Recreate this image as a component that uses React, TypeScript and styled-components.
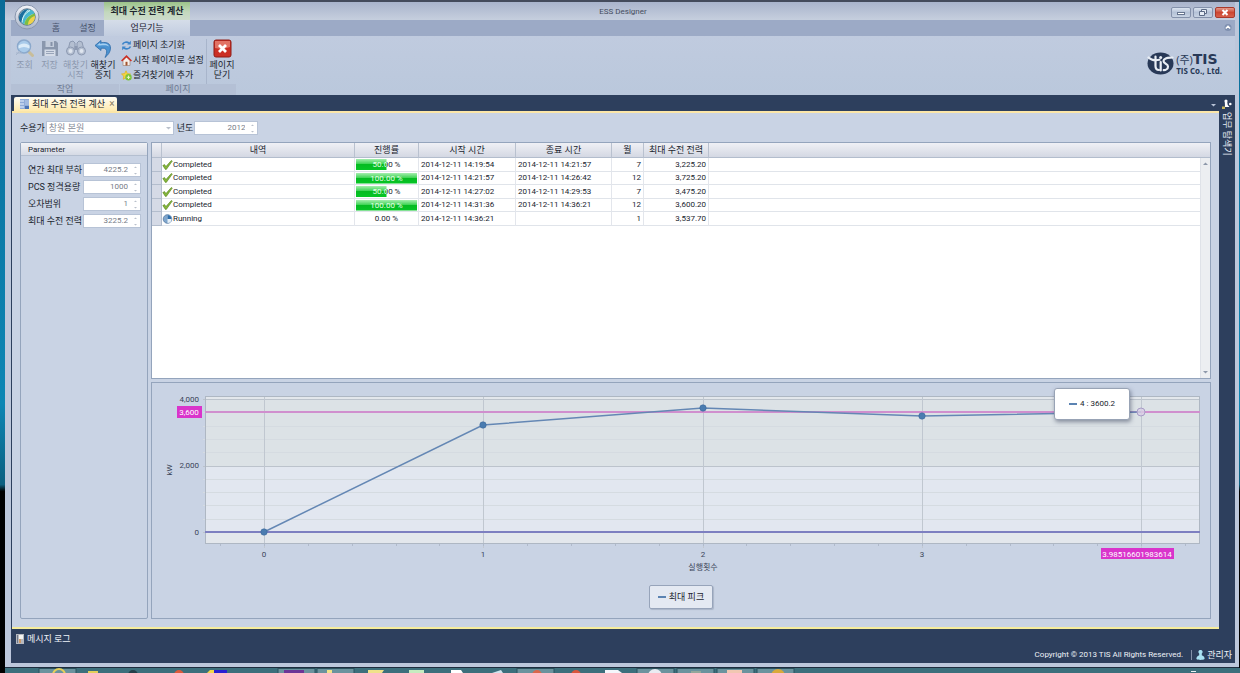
import React, { useLayoutEffect, useRef, useState } from "react";
import styled, { createGlobalStyle, css } from "styled-components";

const GlobalStyle = createGlobalStyle`
  * { box-sizing: border-box; }
  body {
    margin: 0;
    font-family: Roboto, "Noto Sans CJK KR", sans-serif;
    font-size: 9px;
    line-height: 12px;
    color: #20242e;
  }
  button, input, select { font: inherit; color: inherit; margin: 0; }
  button { border: 0; padding: 0; background: none; cursor: pointer; }
`;

const NAVY = "#2d3f5d";
const LINE = "#94a4bc";

const Desktop = styled.div`
  min-height: 100vh;
  display: flex;
  flex-direction: column;
  background: linear-gradient(#0a6c98 0, #0c86b4 60%, #0b5f80 72%, #000 73%);
`;

const AppWindow = styled.div`
  position: relative;
  flex: 1;
  display: flex;
  flex-direction: column;
  margin: 0 1px 0 5px;
  padding: 0 4px 4px 6px;
  background: #bcc7db;
  border-top: 2px solid #444b5c;
  border-bottom: 1px solid #1e2c3e;
`;

/* ---------- title bar ---------- */

const TitleBar = styled.header`
  display: grid;
  grid-template-columns: 1fr auto 1fr;
  height: 18px;
  margin-left: -6px;
  padding-left: 6px;
  background: linear-gradient(#a9b4cc, #c6cfde);
`;

const ContextCaption = styled.div`
  width: 86px;
  margin-left: 93px;
  text-align: center;
  font-weight: 700;
  line-height: 18px;
  white-space: nowrap;
  background: linear-gradient(#9cc389, #c3d8bd 50%, #cfdccf);
`;

const AppTitle = styled.h1`
  margin: 0;
  font-size: 8px;
  font-weight: 400;
  line-height: 20px;
  color: #454d60;
`;

const WindowButtons = styled.div`
  display: flex;
  justify-content: flex-end;
  gap: 2px;
  padding-top: 5px;
`;

const WindowButton = styled.button<{ $danger?: boolean }>`
  display: flex;
  align-items: center;
  justify-content: center;
  width: 20px;
  height: 11px;
  border: 1px solid ${(p) => (p.$danger ? "#a8392c" : "#8491ab")};
  border-radius: 2px;
  background: ${(p) =>
    p.$danger
      ? "linear-gradient(#e39a8c, #cc4631 50%, #d8604a)"
      : "linear-gradient(#dbe3ef, #b5c2d7 50%, #c8d3e3)"};
`;

const Orb = styled.button`
  position: absolute;
  left: 9px;
  top: 2px;
  width: 26px;
  height: 26px;
`;

/* ---------- ribbon ---------- */

const TabStrip = styled.nav`
  display: flex;
  height: 16px;
  padding-left: 30px;
  background: #9caac6;
`;

const RibbonTab = styled.button<{ $active?: boolean; $wide?: boolean }>`
  width: ${(p) => (p.$active ? 86 : p.$wide ? 33 : 30)}px;
  color: ${(p) => (p.$active ? "#1a2030" : "#46526c")};
  ${(p) =>
    p.$active &&
    css`
      background: linear-gradient(#d5dde9, #c2cde0);
    `}
`;

const CollapseButton = styled.button`
  margin-left: auto;
  padding-right: 3px;
`;

const Ribbon = styled.section`
  display: flex;
  height: 59px;
  background: linear-gradient(#c0cbdf, #bac8dc);
`;

const Group = styled.div<{ $width: number }>`
  display: flex;
  flex-direction: column;
  width: ${(p) => p.$width}px;
  margin-right: 1px;
`;

const GroupBody = styled.div`
  flex: 1;
  display: flex;
  padding: 3px 0 0 1px;
`;

const GroupLabel = styled.div`
  height: 11px;
  line-height: 11px;
  text-align: center;
  color: #6d7a92;
  background: #b4c0d5;
`;

const BigButton = styled.button<{ $width: number }>`
  display: flex;
  flex-direction: column;
  align-items: center;
  width: ${(p) => p.$width}px;
  line-height: 10px;
  white-space: pre-line;
  &:disabled { color: #8c98ae; }
  svg { margin: 0 0 2px; flex: none; }
`;

const SmallList = styled.div`
  display: flex;
  flex-direction: column;
  width: 86px;
  margin-right: 2px;
  border-right: 1px solid #a8b5cb;
`;

const SmallButton = styled.button`
  display: flex;
  align-items: center;
  gap: 1px;
  height: 15px;
  padding-bottom: 3px;
  white-space: nowrap;
`;

const Brand = styled.div`
  display: flex;
  align-items: center;
  gap: 2px;
  margin: 0 13px 4px auto;
  color: #283957;
`;

const BrandName = styled.div`
  font-family: "Open Sans", "Noto Sans CJK KR", sans-serif;
  font-size: 8px;
  font-weight: 700;
  line-height: 9px;
`;

const BrandTop = styled.div`
  display: flex;
  align-items: center;
  height: 13px;
  font-size: 11px;
  line-height: 13px;
  font-weight: 400;
  strong { font-family: "DejaVu Sans", sans-serif; font-size: 14px; font-weight: 700; }
`;

/* ---------- work area ---------- */

const Dock = styled.div`
  flex: 1;
  display: flex;
  background: ${NAVY};
`;

const DockMain = styled.div`
  flex: 1;
  display: flex;
  flex-direction: column;
  min-width: 0;
  padding: 2px 0 0 1px;
`;

const DocTabs = styled.div`
  display: flex;
  align-items: flex-end;
  justify-content: space-between;
  height: 14px;
  padding-left: 2px;
`;

const DocTab = styled.div`
  display: flex;
  align-items: center;
  gap: 3px;
  height: 14px;
  padding: 0 1px 0 6px;
  border-radius: 2px 2px 0 0;
  background: linear-gradient(#fffdf4, #ffeaad);
  white-space: nowrap;
`;

const TabClose = styled.button`
  width: 8px;
  font-size: 10px;
  line-height: 12px;
  color: #8c8164;
`;

const OverflowButton = styled.button`
  align-self: center;
  width: 12px;
  height: 12px;
`;

const Page = styled.main`
  flex: 1;
  display: flex;
  flex-direction: column;
  padding: 8px 8px 8px 8px;
  background: #c9d3e4;
  border-top: 2px solid #fbe6a8;
  border-bottom: 2px solid #f6ec9c;
`;

const FilterRow = styled.div`
  display: flex;
  align-items: center;
  height: 14px;
  margin-bottom: 7px;
  gap: 2px;
`;

const Field = styled.label`
  display: flex;
  align-items: center;
  gap: 1px;
  margin-right: 1px;
  white-space: nowrap;
`;

const SelectWrap = styled.span`
  position: relative;
  display: block;
  width: 128px;
  svg { position: absolute; right: 3px; top: 6px; }
`;

const Select = styled.select`
  display: block;
  width: 100%;
  height: 14px;
  padding: 0 2px;
  appearance: none;
  color: #858b97;
  background: #fff;
  border: 1px solid #b7c3d6;
  border-radius: 0;
`;

const SpinBox = styled.span<{ $width: number }>`
  display: flex;
  align-items: center;
  flex: none;
  width: ${(p) => p.$width}px;
  height: 14px;
  padding-right: 2px;
  background: #fff;
  border: 1px solid #b7c3d6;
`;

const SpinInput = styled.input`
  flex: 1;
  min-width: 0;
  width: 0;
  padding: 0 5px 0 0;
  border: 0;
  outline: 0;
  background: none;
  font-size: 8px;
  line-height: 12px;
  text-align: right;
  color: #767c88;
`;

const Columns = styled.div`
  flex: 1;
  display: flex;
  gap: 3px;
  min-width: 0;
`;

const ParameterPanel = styled.section`
  width: 128px;
  border: 1px solid ${LINE};
  border-radius: 2px;
`;

const PanelTitle = styled.h2`
  margin: 0 0 7px;
  padding-left: 7px;
  height: 13px;
  font-size: 8px;
  font-weight: 400;
  line-height: 13px;
  background: linear-gradient(#f1f2f6, #d5dae5);
  border-bottom: 1px solid #b4bfd0;
`;

const ParameterRow = styled.label`
  display: flex;
  align-items: center;
  justify-content: space-between;
  height: 14px;
  margin-bottom: 3px;
  padding: 0 6px 0 7px;
  white-space: nowrap;
`;

const Results = styled.div`
  flex: 1;
  min-width: 0;
  display: flex;
  flex-direction: column;
  gap: 3px;
`;

const GridPanel = styled.section`
  flex: 1;
  display: flex;
  background: #fff;
  border: 1px solid ${LINE};
`;

const GridBody = styled.div`
  flex: 1;
  min-width: 0;
`;

const Table = styled.table`
  width: 100%;
  table-layout: fixed;
  border-collapse: separate;
  border-spacing: 0;
  font-size: 8px;
`;

const headFill = css`
  height: 15px;
  background: linear-gradient(#eff0f5, #d4d8e3);
  border-bottom: 1px solid #b3bdcd;
`;

const Th = styled.th<{ $width?: number }>`
  ${headFill}
  width: ${(p) => (p.$width ? p.$width + "px" : "auto")};
  padding: 0;
  font-size: 9px;
  font-weight: 400;
  line-height: 12px;
  white-space: nowrap;
  border-right: 1px solid #b9c1cf;
  &:last-child { border-right: 0; }
`;

const Row = styled.tr`
  height: 14px;
  &:nth-child(even) { height: 13px; }
`;

const Td = styled.td<{ $right?: boolean; $plain?: boolean }>`
  padding: 0 2px;
  line-height: 12px;
  white-space: nowrap;
  text-align: ${(p) => (p.$right ? "right" : "left")};
  border-bottom: 1px solid #e0e4ea;
  border-right: ${(p) => (p.$plain ? 0 : "1px solid #e3e6ec")};
`;

const MarkerCell = styled.td`
  padding: 0;
  background: #d5dae6;
  border-right: 1px solid #b3bdcd;
  border-bottom: 1px solid #b3bdcd;
`;

const Status = styled.span`
  display: flex;
  align-items: center;
  margin-left: -2px;
`;

const Progress = styled.div`
  position: relative;
  height: 11px;
  margin: 0 -1px;
  line-height: 11px;
  text-align: center;
`;

const barText = css`
  position: absolute;
  inset: 0;
`;

const ProgressBase = styled.span`
  ${barText}
`;

const ProgressFill = styled.span`
  ${barText}
  color: #e9ffe9;
  background: linear-gradient(#a5eeae, #3bd352 45%, #05bb22 50%, #06c626);
`;

const ScrollBar = styled.div`
  width: 10px;
  display: flex;
  flex-direction: column;
`;

const ScrollHead = styled.div`
  ${headFill}
`;

const ScrollTrack = styled.div`
  flex: 1;
  display: flex;
  flex-direction: column;
  justify-content: space-between;
  background: #eceef1;
  border-left: 1px solid #dfe2e8;
`;

const ScrollArrow = styled.button`
  display: flex;
  align-items: center;
  justify-content: center;
  height: 11px;
`;

const ChartPanel = styled.section`
  position: relative;
  height: 237px;
  border: 1px solid ${LINE};
  display: flex;
  flex-direction: column;
  align-items: center;
`;

const Plot = styled.svg`
  display: block;
  width: 100%;
  height: 202px;
  flex: none;
  font-size: 8px;
`;

const Legend = styled.div`
  display: flex;
  align-items: center;
  gap: 3px;
  height: 24px;
  padding: 0 8px;
  background: #e4e9f2;
  border: 1px solid #97a4ba;
  border-radius: 2px;
  box-shadow: 1px 1px 1px #aab5c8;
`;

const Swatch = styled.span`
  width: 8px;
  height: 2px;
  background: #5b83b2;
`;

const Tooltip = styled.div`
  position: absolute;
  top: 5px;
  display: flex;
  align-items: center;
  justify-content: center;
  gap: 3px;
  width: 76px;
  height: 32px;
  font-size: 8px;
  background: #fff;
  border: 1px solid #98a3b5;
  border-radius: 3px;
  box-shadow: 1px 2px 4px rgba(60, 70, 95, 0.55);
`;

const SideBar = styled.aside`
  width: 16px;
  display: flex;
  flex-direction: column;
  align-items: center;
  padding-top: 4px;
`;

const SideTab = styled.button`
  display: flex;
  align-items: center;
  gap: 3px;
  writing-mode: vertical-rl;
  text-orientation: sideways;
  color: #e6ebf4;
  white-space: nowrap;
`;

const Footer = styled.footer`
  display: flex;
  flex-direction: column;
  justify-content: space-between;
  height: 34px;
  padding: 4px 3px 2px 5px;
  color: #eef2f8;
  background: ${NAVY};
`;

const LogButton = styled.button`
  display: flex;
  align-items: center;
  align-self: flex-start;
  gap: 3px;
`;

const FooterRight = styled.div`
  display: flex;
  align-items: center;
  justify-content: flex-end;
`;

const Copyright = styled.span`
  font-size: 8px;
  margin-right: 8px;
`;

const User = styled.span`
  display: flex;
  align-items: center;
  gap: 2px;
  padding-left: 4px;
  border-left: 1px solid #8290a8;
  line-height: 9px;
`;

const TaskBar = styled.div`
  height: 5px;
  margin-left: 5px;
  overflow: hidden;
  background: #3c6f7c;
  svg { display: block; }
`;

/* ---------- icons ---------- */

const OrbIcon = () => (
  <svg width="26" height="26" viewBox="0 0 26 26">
    <defs>
      <linearGradient id="ring" x1="0" y1="0" x2="0" y2="1">
        <stop offset="0" stopColor="#f4f6fa" />
        <stop offset="1" stopColor="#aab5c9" />
      </linearGradient>
    </defs>
    <circle cx="13" cy="13" r="12" fill="url(#ring)" stroke="#8996ae" />
    <circle cx="13" cy="13" r="8.2" fill="#cfe6e8" stroke="#3f5870" strokeWidth=".8" />
    <path d="M5 15c-.5-5 4-10 10-10-4 2.500-7 7-7 14C6.500 18 5.300 17 5 15z" fill="#1b6f9e" />
    <path d="M8 19c0-7 3-11 8-13.500 2.500.8 4 2 4.500 4C15 11 11 15 10.500 20.500z" fill="#48b7cf" />
    <path d="M10.500 20.500C11 15 14.500 11.500 20.700 9.500c1 4-1 9-5.200 10.800-1.700.8-3.300.9-5 .2z" fill="#7dbd42" />
    <path d="M14 20.700c0-4 2.500-7.500 6.900-8.700.3 4.500-2.500 8-6.900 8.700z" fill="#f0d24a" />
    <path d="M8 18.500c.3-5 3-9.500 8-12" stroke="#eefafa" fill="none" />
  </svg>
);

const SearchIcon = () => (
  <svg width="20" height="19" viewBox="0 0 20 19">
    <path d="M12 11l5.500 5.500" stroke="#c8bd9a" strokeWidth="3" strokeLinecap="round" />
    <circle cx="9" cy="7.500" r="6.500" fill="#a9cbea" stroke="#8ba9cc" strokeWidth="1.500" />
    <path d="M3.500 6.500q5.500-4 11 0v3q-5.500-3-11 0z" fill="#dcecf8" />
    <path d="M1 16l4-4M1 14h6" stroke="#a6b5cc" />
  </svg>
);

const SaveIcon = () => (
  <svg width="20" height="19" viewBox="0 0 20 19">
    <path d="M2 2h14l2 2v13H2z" fill="#8a97ad" />
    <path d="M5.500 2h8.500v6H5.500z" fill="#c3ccdb" />
    <path d="M10.500 3h2v4h-2z" fill="#8592a9" />
    <path d="M4.500 10.500h11V17h-11z" fill="#d5dce8" />
    <path d="M6 12.500h8M6 14.500h8" stroke="#98a4b9" />
  </svg>
);

const BinocularsIcon = () => (
  <svg width="22" height="19" viewBox="0 0 22 19">
    <g fill="#b4bfd1" stroke="#8c99b1" strokeWidth="1">
      <path d="M5 3l3-1 2 2v7H3z" />
      <path d="M17 3l-3-1-2 2v7h7z" />
      <circle cx="5.500" cy="12" r="4" />
      <circle cx="16.500" cy="12" r="4" />
    </g>
    <circle cx="5.500" cy="12" r="2" fill="#dfe6ef" />
    <circle cx="16.500" cy="12" r="2" fill="#dfe6ef" />
    <path d="M9.500 7h3v4h-3z" fill="#8c99b1" />
  </svg>
);

const UndoIcon = () => (
  <svg width="20" height="19" viewBox="0 0 20 19">
    <path
      d="M2 6.500l6-5v2.300c6.500-1.300 9.500 1.200 9.500 5.200 0 4-2.500 7-5.500 9.500 1.300-3 2-5.200 1.500-7C13 9.300 11 9 8 9.300v2.200z"
      fill="#4b93d1"
      stroke="#2d6ba8"
      strokeWidth=".8"
    />
    <path d="M4 6.300l3-2.600v1.300c5-1 8-.3 9 2.500-2-1.500-5-1.500-9-1z" fill="#a6d0f1" />
  </svg>
);

const RefreshIcon = () => (
  <svg width="11" height="11" viewBox="0 0 11 11" fill="none" stroke="#3d84c9" strokeWidth="1.700">
    <path d="M1.500 4.500C2.500 2 6 1.500 8 3.200" />
    <path d="M9.500 6.500C8.500 9 5 9.500 3 7.800" />
    <path d="M9.800.8v3.700H6.200z" fill="#3d84c9" stroke="none" />
    <path d="M1.200 10.200V6.500h3.600z" fill="#3d84c9" stroke="none" />
  </svg>
);

const HomeIcon = () => (
  <svg width="11" height="11" viewBox="0 0 11 11">
    <path d="M2 5.500v5h7v-5L5.500 2z" fill="#f6f0ea" stroke="#9a7a68" strokeWidth=".6" />
    <path d="M.6 6L5.500 1.200 10.400 6" stroke="#cc2f24" strokeWidth="1.600" fill="none" />
    <path d="M4.500 6.800h2v3.700h-2z" fill="#a2532f" />
  </svg>
);

const StarIcon = () => (
  <svg width="11" height="11" viewBox="0 0 11 11">
    <path d="M5 .8l1.400 2.800 3.100.4-2.300 2.200.6 3.100L5 7.800 2.200 9.300l.6-3.100L.5 4l3.100-.4z" fill="#f5d442" stroke="#dcb62a" strokeWidth=".8" />
    <circle cx="7.500" cy="7.300" r="3.200" fill="#7cc43a" />
    <path d="M7.500 5.600v3.400M5.800 7.300h3.400" stroke="#e8f7c8" />
  </svg>
);

const CloseIcon = () => (
  <svg width="19" height="19" viewBox="0 0 19 19">
    <rect x="1" y="1" width="17" height="17" rx="2" fill="#cb2f24" stroke="#8f1c16" />
    <path d="M2 2h15v6q-7 3-15 1z" fill="#e27365" />
    <path d="M6 6l7 7M13 6l-7 7" stroke="#fff" strokeWidth="2.800" />
  </svg>
);

const TisMark = () => (
  <svg width="27" height="23" viewBox="0 0 27 23">
    <ellipse cx="13.500" cy="11.500" rx="13" ry="11" fill="#283957" />
    <g fill="none" stroke="#e9eef5" strokeWidth="2.200" strokeLinecap="round">
      <path d="M1.500 5.500c3 3 7 3.200 11 2.300" />
      <path d="M8.500 4.500v9.500c0 2.800 1.500 4 3.500 4" />
      <path d="M13.700 10V18.500" />
      <path d="M25.500 5.500c-4 .5-9 .2-9 3.600 0 3 4.500 2.200 4.500 5.300 0 2.500-2.300 3.800-4.300 3.800" />
    </g>
    <circle cx="13.700" cy="5.500" r="1.500" fill="#e9eef5" />
  </svg>
);

const GridIcon = () => (
  <svg width="9" height="10" viewBox="0 0 9 10">
    <path d="M0 0h9v10H0z" fill="#8fabd8" />
    <path d="M0 1h4v2H0zM0 4h4v2H0zM0 7h4v2H0z" fill="#bccfec" />
    <path d="M5 7h4v3H5z" fill="#4a73b5" />
    <path d="M5 1h4v5H5z" fill="#a3bbe1" />
  </svg>
);

const LogIcon = () => (
  <svg width="8" height="10" viewBox="0 0 8 10">
    <path d="M0 0h8v10H0z" fill="#b6b9c0" />
    <path d="M3 1h4v4H3z" fill="#f3f3f0" />
    <path d="M3 5h2v4H3z" fill="#cf9a68" />
    <path d="M1 1h1v8H1z" fill="#6f7787" />
  </svg>
);

const UserIcon = () => (
  <svg width="9" height="10" viewBox="0 0 9 10">
    <path d="M4.500 0a2 2 0 011.300 3.600v1.700C8 6 8.600 7.500 8.600 9c-2 1.200-6.200 1.200-8.200 0 0-1.500.8-3 2.800-3.700V3.600A2 2 0 014.500 0z" fill="#a9e2f3" />
  </svg>
);

const NavIcon = () => (
  <svg width="10" height="10" viewBox="0 0 10 10">
    <circle cx="4" cy="2" r="1.600" fill="#fff" />
    <path d="M2.800 3h2.400l.5 3 1.800 2H3z" fill="#fff" />
    <circle cx="8.300" cy="5" r="1.300" fill="#fff" />
    <path d="M0 7.500h3V10H0z" fill="#c9b75a" />
  </svg>
);

const CheckIcon = () => (
  <svg width="11" height="10" viewBox="0 0 11 10">
    <path d="M.8 5.500L2.600 4.600l1.300 2L9.300.5l1 .6L4.300 9.400h-.9z" fill="#86b83a" stroke="#54801f" strokeWidth=".6" />
  </svg>
);

const RunningIcon = () => (
  <svg width="11" height="10" viewBox="0 0 11 10">
    <circle cx="5.500" cy="5" r="4.300" fill="#7fa6cd" stroke="#5377a0" strokeWidth=".8" />
    <path d="M5.500 5V1a4 4 0 010 8z" fill="#e8f1f9" />
    <path d="M5.500 5V1a4 4 0 014 4z" fill="#2f6da9" />
  </svg>
);

const Caret = ({ up, color = "#8d98aa" }: { up?: boolean; color?: string }) => (
  <svg width="5" height="3" viewBox="0 0 5 3">
    <path d={up ? "M0 3L2.500.5 5 3z" : "M0 0l2.500 2.500L5 0z"} fill={color} />
  </svg>
);

const SpinArrows = () => (
  <svg width="5" height="10" viewBox="0 0 5 10" fill="#b9c0cb">
    <path d="M1 3l1.500-1.500L4 3zM1 8l1.500 1.500L4 8z" />
  </svg>
);

/* ---------- parts ---------- */

const Spin = ({ id, value, width }: { id: string; value: string; width: number }) => {
  const [text, setText] = useState(value);
  return (
    <SpinBox $width={width}>
      <SpinInput id={id} value={text} onChange={(e) => setText(e.target.value)} />
      <SpinArrows />
    </SpinBox>
  );
};

const parameters = [
  { id: "load", label: "연간 최대 부하", value: "4225.2" },
  { id: "pcs", label: "PCS 정격용량", value: "1000" },
  { id: "tolerance", label: "오차범위", value: "1" },
  { id: "peak", label: "최대 수전 전력", value: "3225.2" },
];

const runs = [
  { done: true, progress: 50, start: "2014-12-11 14:19:54", end: "2014-12-11 14:21:57", month: 7, power: "3,225.20" },
  { done: true, progress: 100, start: "2014-12-11 14:21:57", end: "2014-12-11 14:26:42", month: 12, power: "3,725.20" },
  { done: true, progress: 50, start: "2014-12-11 14:27:02", end: "2014-12-11 14:29:53", month: 7, power: "3,475.20" },
  { done: true, progress: 100, start: "2014-12-11 14:31:36", end: "2014-12-11 14:36:21", month: 12, power: "3,600.20" },
  { done: false, progress: 0, start: "2014-12-11 14:36:21", end: "", month: 1, power: "3,537.70" },
];

const ProgressBar = ({ value }: { value: number }) => {
  const text = value.toFixed(2) + " %";
  return (
    <Progress>
      <ProgressBase>{text}</ProgressBase>
      {value > 0 && (
        <ProgressFill aria-hidden style={{ clipPath: `inset(0 ${100 - value}% 0 0)` }}>{text}</ProgressFill>
      )}
    </Progress>
  );
};

const series = [0, 3225.2, 3725.2, 3475.2, 3600.2];
const minorSteps = Array.from({ length: 11 }, (_, i) => i * 400);

const Chart = () => {
  const ref = useRef<HTMLElement>(null);
  const [width, setWidth] = useState(1058);
  useLayoutEffect(() => {
    const el = ref.current;
    if (!el) return;
    const measure = () => setWidth(el.clientWidth);
    measure();
    const observer = new ResizeObserver(measure);
    observer.observe(el);
    return () => observer.disconnect();
  }, []);

  const left = 53;
  const right = width - 10;
  const top = 13;
  const bottom = 161;
  const span = right - left;
  const x = (n: number) => Math.round(left + span * (0.0593 + 0.2204 * n));
  const y = (v: number) => Math.round(149 - (v * 133) / 4000);
  const points = series.map((v, i) => `${x(i)},${y(v)}`).join(" ");

  return (
    <ChartPanel ref={ref}>
      <Plot>
        <rect x={left} y={top} width={span} height={bottom - top} fill="#e3e7ec" />
        <rect x={left} y={y(4000)} width={span} height={y(2000) - y(4000)} fill="#dce2e6" />
        <rect x={left} y={y(2000)} width={span} height={y(0) - y(2000)} fill="#e2e7f0" />
        <g shapeRendering="crispEdges">
          {minorSteps.map((v) => (
            <path key={v} d={`M${left - 2} ${y(v)}.5H${right}`} stroke={v % 2000 ? "#d5dbe1" : "#bcc3cc"} />
          ))}
          {series.map((_, i) => (
            <path key={i} d={`M${x(i)}.5 ${top}V${bottom + 4}`} stroke="#c0c7d0" />
          ))}
          {Array.from({ length: 23 }, (_, i) => x((i - 1) / 5)).map((p) => (
            <path key={p} d={`M${p}.5 ${bottom}v2`} stroke="#b0bacb" />
          ))}
          <rect x={left + 0.5} y={top + 0.5} width={span - 1} height={bottom - top - 1} fill="none" stroke="#aeb7c3" />
          <path d={`M${left} ${y(0)}H${right}`} stroke="#7d7fc0" strokeWidth="2" />
          <path d={`M${left} 29H${right}`} stroke="#d08fce" strokeWidth="2" />
        </g>
        <polyline points={points} fill="none" stroke="#6487b4" strokeWidth="1.500" />
        {series.slice(0, 4).map((v, i) => (
          <circle key={i} cx={x(i)} cy={y(v)} r="3.200" fill="#4a7cb0" stroke="#3a689b" strokeWidth=".6" />
        ))}
        <circle cx={x(4)} cy={y(3600.2)} r="4" fill="#d9cfe6" fillOpacity=".8" stroke="#a79cc6" />

        <g fill="#3a4458" textAnchor="end">
          <text x="47" y="19">4,000</text>
          <text x="47" y="85">2,000</text>
          <text x="47" y="152">0</text>
        </g>
        <g fill="#3a4458" textAnchor="middle">
          {[0, 1, 2, 3].map((n) => (
            <text key={n} x={x(n)} y="174">{n}</text>
          ))}
          <text x={x(2)} y="187">실행횟수</text>
          <text transform="translate(20 87) rotate(-90)">kW</text>
        </g>
        <rect x="25" y="23" width="25" height="12" fill="#d934cb" />
        <text x="37" y="32" fill="#fff" textAnchor="middle">3,600</text>
        <rect x={x(4) - 40} y="165" width="73" height="11" fill="#d934cb" />
        <text x={x(4) - 4} y="174" fill="#fff" textAnchor="middle">3.98516601983614</text>
      </Plot>
      <Legend>
        <Swatch />
        최대 피크
      </Legend>
      <Tooltip style={{ left: x(4) - 87 }}>
        <Swatch />4 : 3600.2
      </Tooltip>
    </ChartPanel>
  );
};

const taskSlots = [39, 278, 317, 517, 637, 677, 717, 757];

export default function App() {
  return (
    <Desktop>
      <GlobalStyle />
      <AppWindow>
        <TitleBar>
          <ContextCaption>최대 수전 전력 계산</ContextCaption>
          <AppTitle>ESS Designer</AppTitle>
          <WindowButtons>
            <WindowButton aria-label="Minimize">
              <svg width="10" height="7"><rect x="1.500" y="3.500" width="7" height="2" fill="#fff" stroke="#66748e" /></svg>
            </WindowButton>
            <WindowButton aria-label="Restore">
              <svg width="10" height="8" fill="#e8eef6" stroke="#5c6a85"><path d="M3.500.5h5v4h-5z" /><path d="M1.500 2.500h5v4h-5z" /></svg>
            </WindowButton>
            <WindowButton $danger aria-label="Close">
              <svg width="8" height="7" stroke="#fff" strokeWidth="2"><path d="M1.500 1l5 5M6.500 1l-5 5" /></svg>
            </WindowButton>
          </WindowButtons>
        </TitleBar>
        <Orb aria-label="Application menu"><OrbIcon /></Orb>

        <TabStrip>
          <RibbonTab>홈</RibbonTab>
          <RibbonTab $wide>설정</RibbonTab>
          <RibbonTab $active>업무기능</RibbonTab>
          <CollapseButton aria-label="Collapse ribbon">
            <svg width="8" height="7" fill="none"><circle cx="4" cy="3.500" r="3.500" fill="#7f90b0" /><path d="M1.800 4.500L4 2.300l2.200 2.200" stroke="#fff" strokeWidth="1.400" /></svg>
          </CollapseButton>
        </TabStrip>

        <Ribbon>
          <Group $width={108}>
            <GroupBody>
              <BigButton $width={25} disabled><SearchIcon />조회</BigButton>
              <BigButton $width={25} disabled><SaveIcon />저장</BigButton>
              <BigButton $width={27} disabled><BinocularsIcon />{"해찾기\n시작"}</BigButton>
              <BigButton $width={28}><UndoIcon />{"해찾기\n중지"}</BigButton>
            </GroupBody>
            <GroupLabel>작업</GroupLabel>
          </Group>
          <Group $width={116}>
            <GroupBody>
              <SmallList>
                <SmallButton><RefreshIcon />페이지 초기화</SmallButton>
                <SmallButton><HomeIcon />시작 페이지로 설정</SmallButton>
                <SmallButton><StarIcon />즐겨찾기에 추가</SmallButton>
              </SmallList>
              <BigButton $width={26}><CloseIcon />{"페이지\n닫기"}</BigButton>
            </GroupBody>
            <GroupLabel>페이지</GroupLabel>
          </Group>
          <Brand>
            <TisMark />
            <BrandName>
              <BrandTop>(주)<strong>TIS</strong></BrandTop>
              TIS Co., Ltd.
            </BrandName>
          </Brand>
        </Ribbon>

        <Dock>
          <DockMain>
            <DocTabs>
              <DocTab>
                <GridIcon />최대 수전 전력 계산
                <TabClose aria-label="Close tab">×</TabClose>
              </DocTab>
              <OverflowButton aria-label="Tab list"><Caret color="#b7c2d6" /></OverflowButton>
            </DocTabs>
            <Page>
              <FilterRow>
                <Field htmlFor="customer">
                  수용가
                  <SelectWrap>
                    <Select id="customer" defaultValue="창원 본원"><option>창원 본원</option></Select>
                    <Caret color="#b9c0cb" />
                  </SelectWrap>
                </Field>
                <Field htmlFor="year">
                  년도
                  <Spin id="year" value="2012" width={64} />
                </Field>
              </FilterRow>
              <Columns>
                <ParameterPanel>
                  <PanelTitle>Parameter</PanelTitle>
                  {parameters.map((p) => (
                    <ParameterRow key={p.id} htmlFor={p.id}>
                      {p.label}
                      <Spin id={p.id} value={p.value} width={58} />
                    </ParameterRow>
                  ))}
                </ParameterPanel>
                <Results>
                  <GridPanel>
                    <GridBody>
                      <Table>
                        <thead>
                          <tr>
                            <Th $width={10} />
                            <Th $width={193}>내역</Th>
                            <Th $width={64}>진행률</Th>
                            <Th $width={97}>시작 시간</Th>
                            <Th $width={96}>종료 시간</Th>
                            <Th $width={32}>월</Th>
                            <Th $width={65}>최대 수전 전력</Th>
                            <Th />
                          </tr>
                        </thead>
                        <tbody>
                          {runs.map((r) => (
                            <Row key={r.start}>
                              <MarkerCell />
                              <Td>
                                <Status>
                                  {r.done ? <CheckIcon /> : <RunningIcon />}
                                  {r.done ? "Completed" : "Running"}
                                </Status>
                              </Td>
                              <Td><ProgressBar value={r.progress} /></Td>
                              <Td>{r.start}</Td>
                              <Td>{r.end}</Td>
                              <Td $right>{r.month}</Td>
                              <Td $right>{r.power}</Td>
                              <Td $plain />
                            </Row>
                          ))}
                        </tbody>
                      </Table>
                    </GridBody>
                    <ScrollBar>
                      <ScrollHead />
                      <ScrollTrack>
                        <ScrollArrow aria-label="Scroll up"><Caret up /></ScrollArrow>
                        <ScrollArrow aria-label="Scroll down"><Caret /></ScrollArrow>
                      </ScrollTrack>
                    </ScrollBar>
                  </GridPanel>
                  <Chart />
                </Results>
              </Columns>
            </Page>
          </DockMain>
          <SideBar>
            <SideTab><NavIcon />업무 탐색기</SideTab>
          </SideBar>
        </Dock>

        <Footer>
          <LogButton><LogIcon />메시지 로그</LogButton>
          <FooterRight>
            <Copyright>Copyright © 2013 TIS All Rights Reserved.</Copyright>
            <User><UserIcon />관리자</User>
          </FooterRight>
        </Footer>
      </AppWindow>
      <TaskBar>
        <svg width="1235" height="5">
          {taskSlots.map((s) => (
            <rect key={s} x={s - 5} y="0.500" width="37" height="8" fill="#6b939e" stroke="#2b525e" />
          ))}
          <circle cx="54" cy="7" r="6" fill="none" stroke="#e6d05a" strokeWidth="2" />
          <path d="M83 3h10v2H83z" fill="#e2cf5a" />
          <circle cx="128" cy="7" r="5" fill="#24404a" />
          <circle cx="174" cy="7" r="5" fill="#dc5a3c" />
          <path d="M202 5l3-3h6v3z" fill="#f3d64a" />
          <path d="M209 2h13v3h-13z" fill="#2a1ed2" />
          <path d="M279 2h20v3h-20z" fill="#6c3596" />
          <path d="M322 2h5v3h-5zM363 2h16l-2 3h-14z" fill="#f0e28a" />
          <path d="M404 2h15v3h-15z" fill="#c6ecc0" />
          <path d="M446 2h10l2 3h-12z" fill="#fff" />
          <path d="M487 5l9-3 2 3z" fill="#cfe4ee" />
          <circle cx="532" cy="7" r="5" fill="#d9664c" />
          <circle cx="571" cy="7" r="5" fill="#d9553c" />
          <path d="M600 2h13l4 3h-17z" fill="#f4f6fb" />
          <circle cx="650" cy="8" r="7" fill="#e9ecf2" />
          <path d="M686 3h10v2h-10z" fill="#93a79b" />
          <path d="M722 2h15v3h-15z" fill="#f1c7b2" />
          <circle cx="773" cy="8" r="7" fill="#d9a93a" />
          <path d="M1186 3h5v1h-5z" fill="#e8f2f4" />
        </svg>
      </TaskBar>
    </Desktop>
  );
}
